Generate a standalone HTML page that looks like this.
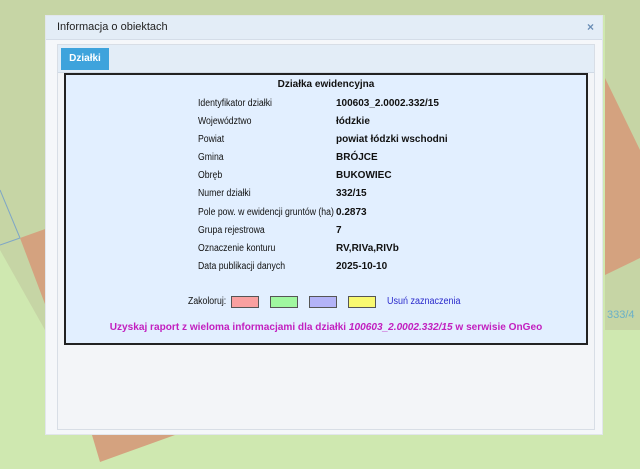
<!DOCTYPE html>
<html><head><meta charset="utf-8"><style>
body{margin:0;width:640px;height:469px;overflow:hidden;position:relative;font-family:"Liberation Sans",Arial,sans-serif;background:#cfe8b0}
svg.bg{position:absolute;left:0;top:0}
.dlg{position:absolute;left:45px;top:15px;width:558px;height:420px;background:#f5f7fa;border:1px solid #e2e6ec;box-sizing:border-box}
.hdr{position:absolute;left:0;top:0;right:0;height:23px;background:#e3edf7;border-bottom:1px solid #d4dde8;font-size:11px;color:#222;line-height:23px;padding-left:11px}
.x{position:absolute;right:8px;top:0;color:#6a8db5;font-size:12px;font-weight:bold}
.inner{position:absolute;left:11px;top:28px;width:538px;height:386px;border:1px solid #d8dee6;box-sizing:border-box;background:#f3f5f8}
.tabbar{position:absolute;left:0;top:0;right:0;height:27px;background:#e3edf7;border-bottom:1px solid #d0dae6}
.tab{position:absolute;left:3px;top:3px;width:48px;height:22px;background:#3ea3dc;color:#fff;font-size:10px;font-weight:bold;line-height:22px;text-align:center}
.box{position:absolute;left:6px;top:28px;width:524px;height:272px;border:2px solid #222;box-sizing:border-box;background:#e2efff}
.t{position:absolute;font-size:10px;color:#111;white-space:nowrap}
.b{font-weight:bold}
.sw{position:absolute;top:221px;width:28px;height:12px;border:1px solid #555;box-sizing:border-box}
</style></head><body>
<svg class="bg" width="640" height="469">
<polygon points="0,0 640,0 640,330 605,330 605,15 45,15 45,330 0,250" fill="#c6d5a5"/>
<polygon points="20,238 48,228 48,312" fill="#d4a27f"/>
<polygon points="605,78 640,150 640,258 605,275" fill="#d4a27f"/>
<polygon points="92,435 175,435 100,462" fill="#d4a27f"/>
<line x1="0" y1="190" x2="20" y2="238" stroke="#7fa6c6" stroke-width="1"/>
<line x1="0" y1="245" x2="20" y2="238" stroke="#7fa6c6" stroke-width="1"/>
<text x="607" y="318" font-size="11" fill="#6ab0c8" font-family="Liberation Sans">333/4</text>
</svg>
<div class="dlg">
<div class="hdr">Informacja o obiektach<span class="x">×</span></div>
<div class="inner">
<div class="tabbar"><div class="tab">Działki</div></div>
<div class="box">
<div class="t b" style="left:0;right:0;text-align:center;top:4px">Działka ewidencyjna</div>
<div class="t" style="left:132px;top:20px;line-height:18.1px;transform:scaleX(0.87);transform-origin:0 0">Identyfikator działki<br>Województwo<br>Powiat<br>Gmina<br>Obręb<br>Numer działki<br>Pole pow. w ewidencji gruntów (ha)<br>Grupa rejestrowa<br>Oznaczenie konturu<br>Data publikacji danych</div>
<div class="t b" style="left:270px;top:20px;line-height:18.1px">100603_2.0002.332/15<br>łódzkie<br>powiat łódzki wschodni<br>BRÓJCE<br>BUKOWIEC<br>332/15<br>0.2873<br>7<br>RV,RIVa,RIVb<br>2025-10-10</div>
<div class="t" style="left:122px;top:221px;transform:scaleX(0.87);transform-origin:0 0">Zakoloruj:</div>
<div class="sw" style="left:165px;background:#f9a0a0"></div>
<div class="sw" style="left:204px;background:#a0f7a0"></div>
<div class="sw" style="left:243px;background:#b3b3f7"></div>
<div class="sw" style="left:282px;background:#f9f970"></div>
<div class="t" style="left:321px;top:221px;color:#2a2acc;transform:scaleX(0.9);transform-origin:0 0">Usuń zaznaczenia</div>
<div class="t b" style="left:0;right:0;text-align:center;top:246px;color:#c21fbf;font-size:10.5px;transform:scaleX(0.96)">Uzyskaj raport z wieloma informacjami dla działki <i>100603_2.0002.332/15</i> w serwisie OnGeo</div>
</div>
</div>
</div>
</body></html>
